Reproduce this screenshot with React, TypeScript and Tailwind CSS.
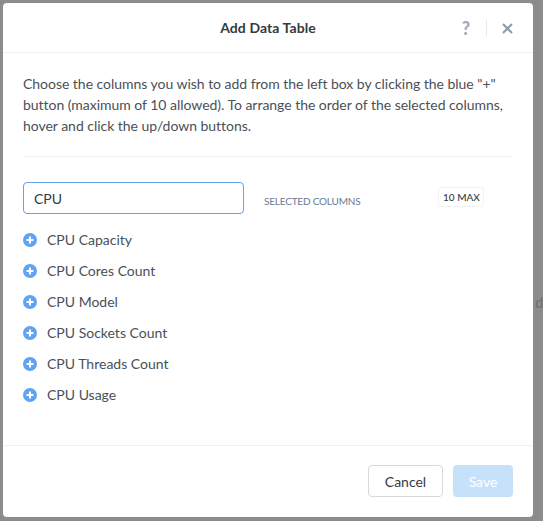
const columns = [
  'CPU Capacity',
  'CPU Cores Count',
  'CPU Model',
  'CPU Sockets Count',
  'CPU Threads Count',
  'CPU Usage',
]

function PlusIcon() {
  return (
    <svg width="14" height="14" viewBox="0 0 14 14" className="shrink-0">
      <circle cx="7" cy="7" r="7" fill="#5fa3f2" />
      <path d="M7 3.5v7M3.5 7h7" stroke="#fff" strokeWidth="2" />
    </svg>
  )
}

export default function App() {
  return (
    <div className="relative h-[521px] w-[543px] overflow-hidden bg-[#8c8c8c] pt-[3px] pl-[3px] font-['Lato',sans-serif] text-[#343a40]">
      <span className="absolute top-[291px] left-[535px] text-[15px] text-[#6f6f6f]">d</span>

      <div className="flex h-[514px] w-[530px] flex-col rounded-[4px] bg-white">
        <header className="relative flex h-[50px] shrink-0 items-center justify-center border-b border-[#f0f2f5]">
          <h1 className="text-[14px] font-bold tracking-[0.08px] text-[#343a40]">Add Data Table</h1>
          <div className="absolute top-[17px] right-[20px] flex items-center">
            <span className="text-[18px] leading-[16px] font-black text-[#a3adba]">?</span>
            <span className="mr-[15px] ml-[16px] h-[16px] w-px bg-[#e6e9ee]" />
            <svg width="11" height="11" viewBox="0 0 11 11">
              <path d="M1 1l9 9M10 1l-9 9" stroke="#8f9aa8" strokeWidth="2" />
            </svg>
          </div>
        </header>

        <main className="flex flex-1 flex-col px-5">
          <p className="border-b border-[#f0f2f5] pt-[20px] pb-[20px] text-[14px] leading-[21px] tracking-[-0.03px] text-[#4a5058]">
            Choose the columns you wish to add from the left box by clicking the blue "+"
            button (maximum of 10 allowed). To arrange the order of the selected columns,
            hover and click the up/down buttons.
          </p>

          <div className="mt-[25px] flex items-start">
            <div className="flex h-[32px] w-[221px] items-center rounded-[4px] border border-[#5fa3f2] px-[10px] pt-px text-[14px] text-[#343a40]">
              CPU
            </div>
            <span className="mt-[13px] ml-[20px] text-[10px] leading-[12px] tracking-[-0.2px] text-[#6b7a90]">
              SELECTED COLUMNS
            </span>
            <span className="mt-[5px] ml-[78px] flex h-[20px] w-[46px] items-center justify-center rounded-[2px] border border-[#f2f3f5] text-[10px] font-medium text-[#343a40]">
              10 MAX
            </span>
          </div>

          <ul className="mt-[10px] flex flex-col">
            {columns.map((name) => (
              <li key={name} className="flex h-[31px] items-center gap-[10px] text-[14px] text-[#4a5058]">
                <PlusIcon />
                <span>{name}</span>
              </li>
            ))}
          </ul>
        </main>

        <footer className="flex h-[72px] shrink-0 items-start justify-end gap-[10px] border-t border-[#f0f2f5] px-5 pt-[19px]">
          <button className="h-[32px] w-[75px] rounded-[4px] border border-[#d5d9df] bg-white text-[14px] text-[#343a40]">
            Cancel
          </button>
          <button className="h-[32px] w-[60px] rounded-[4px] bg-[#c6e1fa] text-[14px] text-white">
            Save
          </button>
        </footer>
      </div>
    </div>
  )
}
